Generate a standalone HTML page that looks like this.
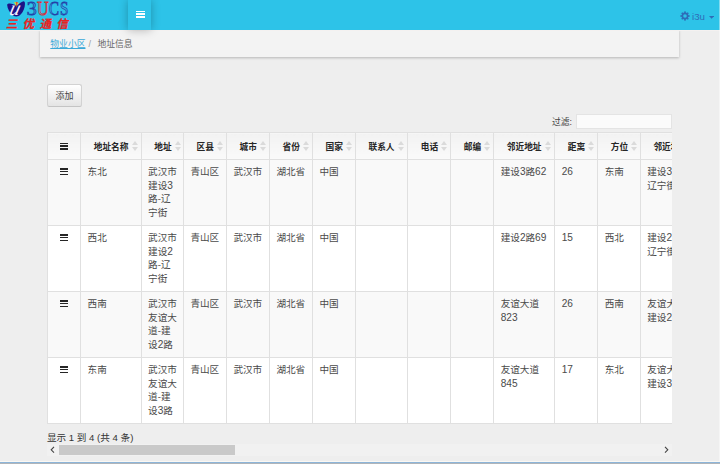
<!DOCTYPE html>
<html lang="zh-CN">
<head>
<meta charset="utf-8">
<title>地址信息</title>
<style>
*{box-sizing:border-box;margin:0;padding:0}
html,body{width:720px;height:464px;overflow:hidden}
body{background:#eeeeee;font-family:"Liberation Sans","Noto Sans CJK SC",sans-serif;font-size:9.33px;color:#444;position:relative}
.navbar{position:absolute;left:0;top:0;width:720px;height:29.7px;background:#2dc3e8;z-index:2}
.logo{position:absolute;left:0;top:0;width:80px;height:30px}
.toggle{position:absolute;left:128px;top:0;width:23.2px;height:29.7px;background:#2dc3e8;box-shadow:0 0 10px rgba(0,0,0,.27)}
.toggle i{position:absolute;left:7.8px;width:8.9px;height:1.85px;background:#fff}
.account{position:absolute;left:0;top:0;width:720px;height:30px;color:#2f6db8}
.account .name{position:absolute;left:692px;top:11.4px;font-size:9.7px;line-height:11px;color:#2f6db8;white-space:nowrap}
.crumbs{position:absolute;left:40px;top:30px;width:639px;height:27px;background:#f3f3f3;box-shadow:0 1px 2.5px rgba(0,0,0,.24);font-size:8.8px;line-height:28.6px;padding-left:10.3px;color:#666;white-space:nowrap}
.crumbs a{color:#3aa9d8;text-decoration:underline}
.crumbs .sep{color:#999;padding:0 4px 0 3px}
.btn{position:absolute;left:47px;top:84px;width:35px;height:23px;border:1px solid #d2d2d2;border-bottom-color:#c4c4c4;border-radius:2.5px;background:linear-gradient(#ffffff,#e4e4e4);font-size:9px;line-height:22.6px;text-align:center;color:#444}
.filter{position:absolute;left:552px;top:114.5px;height:14px;font-size:8.8px;line-height:14px;color:#444;white-space:nowrap}
.filter span{display:inline-block;width:24.5px}
.filter input{position:absolute;left:24px;top:-.5px;width:96px;height:14.5px;border:1px solid #e4e4e4;background:#fbfbfb;border-radius:0}
.scroller{position:absolute;left:47px;top:132px;width:625.3px;height:313px;overflow:hidden}
table{border-collapse:collapse;table-layout:fixed;width:700px;background:#fff}
th,td{border:1px solid #e0e0e0;vertical-align:top;text-align:left;overflow:hidden}
th{height:26.5px;font-size:8.7px;font-weight:bold;color:#262626;line-height:13.3px;padding:7.5px 0 0 12.7px;background:linear-gradient(#f2f2f2,#fafafa);white-space:nowrap}
td{height:66px;font-size:9.6px;line-height:13.45px;padding:5.9px 4px 0 6.6px;color:#4a4a4a;word-break:break-all}
.n{font-weight:normal;font-size:10.1px}
tr.odd td{background:#f9f9f9}
tr.even td{background:#ffffff}
.bars{display:inline-block;width:8px;height:7px;position:relative;vertical-align:top}
.bars i{position:absolute;left:0;width:8.3px;height:1.45px;background:#262626}
th.c0,td.c0{padding-left:0;padding-right:0;text-align:center}
th.c0 .bars{margin-top:2px}
td.c0 .bars{margin-top:2.7px}
.sort{display:inline-block;width:6px;height:10.2px;position:relative;vertical-align:top;margin:.5px 0 0 3.2px}
.sort:before,.sort:after{content:"";position:absolute;left:0;border-left:3px solid transparent;border-right:3px solid transparent}
.sort:before{top:0;border-bottom:4.8px solid #dadada}
.sort:after{bottom:0;border-top:4.8px solid #dadada}
.info{position:absolute;left:47px;top:430.5px;font-size:9.6px;line-height:13px;color:#333;white-space:nowrap}
.hscroll{position:absolute;left:47px;top:444.3px;width:625.3px;height:11.6px;background:#f1f1f1}
.hscroll .thumb{position:absolute;left:11.8px;top:.8px;width:176.5px;height:10px;background:#c9c9c9}
.hscroll svg{position:absolute;top:0}
.band{position:absolute;left:0;top:29.7px;width:720px;height:1.6px;background:#f4f1f0;z-index:1}
.redge{position:absolute;left:718.8px;top:0;width:1.2px;height:461px;background:rgba(255,255,255,.4);z-index:3}
.edge1{position:absolute;left:0;top:461px;width:720px;height:1px;background:#fbf8f3}
.edge2{position:absolute;left:0;top:462px;width:720px;height:1px;background:#8db5d9}
.edge3{position:absolute;left:0;top:463px;width:720px;height:1px;background:#b1b5b9}
</style>
</head>
<body>
<div class="navbar">
  <svg class="logo" viewBox="0 0 80 30" width="80" height="30">
    <path d="M7.1 4.8 C7.6 3.2 10.4 3.1 12.6 4 C14.2 4.6 15.6 5.4 16.6 5.3 C18.4 4.6 21 1.6 23.6 1.2 C25.2 1.4 25.2 4 24.7 6.4 C23.8 10.8 21.4 14.6 18.6 15.9 C16.8 16.7 14.8 16.5 13.2 15.4 C9.8 13 7.4 8.8 7.1 4.8 Z" fill="#1c1487"/>
    <path d="M14 1.8 L16.2 6.8 L16.2 2.4 Z" fill="#c8e03a"/>
    <path d="M15.8 1.8 L16.6 7.8 L18 2.2 Z" fill="#e0502a"/>
    <path d="M17.6 2.6 L17.4 6 L18.8 3 Z" fill="#f0d040"/>
    <text transform="translate(8.6 15) skewX(-14)" font-family="'Liberation Serif',serif" font-style="italic" font-size="21" fill="#f4f0ff" textLength="10.4" lengthAdjust="spacingAndGlyphs">u</text>
    <text x="26.7" y="14.5" font-family="'Liberation Serif',serif" font-size="18.4" fill="#38bde7" stroke="#2440a8" stroke-width=".8" textLength="10" lengthAdjust="spacingAndGlyphs">3</text>
    <text x="37" y="14.5" font-family="'Liberation Serif',serif" font-size="18.4" fill="#4cb8e4" stroke="#d8323c" stroke-width=".8" textLength="11.6" lengthAdjust="spacingAndGlyphs">U</text>
    <text x="49" y="14.5" font-family="'Liberation Serif',serif" font-size="18.4" fill="#38bde7" stroke="#2440a8" stroke-width=".8" textLength="10" lengthAdjust="spacingAndGlyphs">C</text>
    <text x="60" y="14.5" font-family="'Liberation Serif',serif" font-size="18.4" fill="#38bde7" stroke="#2440a8" stroke-width=".8" textLength="8.4" lengthAdjust="spacingAndGlyphs">S</text>
    <g font-family="'Noto Sans CJK SC',sans-serif" font-weight="bold" font-size="11.4" fill="#e8231f" stroke="#e8231f" stroke-width=".3">
      <text transform="translate(5.9 27.5) skewX(-12)">三</text>
      <text transform="translate(22.8 27.5) skewX(-12)">优</text>
      <text transform="translate(39.8 27.5) skewX(-12)">通</text>
      <text transform="translate(56.4 27.5) skewX(-12)">信</text>
    </g>
  </svg>
  <div class="toggle"><i style="top:10.6px"></i><i style="top:13.45px"></i><i style="top:16.3px"></i></div>
  <svg style="position:absolute;left:679.6px;top:10.8px" width="10" height="10" viewBox="-5 -5 10 10">
    <g fill="#2f6db8">
      <circle r="3.4"/>
      <rect x="-.85" y="-4.6" width="1.7" height="9.2"/>
      <rect x="-.85" y="-4.6" width="1.7" height="9.2" transform="rotate(45)"/>
      <rect x="-.85" y="-4.6" width="1.7" height="9.2" transform="rotate(90)"/>
      <rect x="-.85" y="-4.6" width="1.7" height="9.2" transform="rotate(135)"/>
    </g>
    <circle r="1.8" fill="#2dc3e8"/>
  </svg>
  <div class="account"><span class="name">i3u</span></div>
  <svg style="position:absolute;left:709px;top:16.2px" width="5.2" height="2.8" viewBox="0 0 5.2 2.8"><path d="M0 0h5.2L2.6 2.8z" fill="#2f6db8"/></svg>
</div>

<div class="crumbs"><a>物业小区</a><span class="sep">/</span> 地址信息</div>

<div class="btn">添加</div>

<div class="filter"><span>过滤:</span><input type="text"></div>

<div class="scroller">
<table>
<colgroup>
<col style="width:33px"><col style="width:60.5px"><col style="width:42.3px"><col style="width:43px"><col style="width:43px"><col style="width:43px"><col style="width:43px"><col style="width:52.3px"><col style="width:43px"><col style="width:43px"><col style="width:61px"><col style="width:43px"><col style="width:42.6px"><col style="width:107.7px">
</colgroup>
<thead>
<tr>
<th class="c0"><span class="bars"><i style="top:0"></i><i style="top:2.8px"></i><i style="top:5.6px"></i></span></th>
<th>地址名称<span class="sort"></span></th>
<th>地址<span class="sort"></span></th>
<th>区县<span class="sort"></span></th>
<th>城市<span class="sort"></span></th>
<th>省份<span class="sort"></span></th>
<th>国家<span class="sort"></span></th>
<th>联系人<span class="sort"></span></th>
<th>电话<span class="sort"></span></th>
<th>邮编<span class="sort"></span></th>
<th>邻近地址<span class="sort"></span></th>
<th>距离<span class="sort"></span></th>
<th>方位<span class="sort"></span></th>
<th>邻近地址2<span class="sort"></span></th>
</tr>
</thead>
<tbody>
<tr class="odd">
<td class="c0"><span class="bars"><i style="top:0"></i><i style="top:2.8px"></i><i style="top:5.6px"></i></span></td>
<td>东北</td><td>武汉市<br>建设<b class="n">3</b><br>路-辽<br>宁街</td><td>青山区</td><td>武汉市</td><td>湖北省</td><td>中国</td><td></td><td></td><td></td><td>建设<b class="n">3</b>路<b class="n">62</b></td><td><b class="n">26</b></td><td>东南</td><td>建设<b class="n">3</b>路-<br>辽宁街</td>
</tr>
<tr class="even">
<td class="c0"><span class="bars"><i style="top:0"></i><i style="top:2.8px"></i><i style="top:5.6px"></i></span></td>
<td>西北</td><td>武汉市<br>建设<b class="n">2</b><br>路-辽<br>宁街</td><td>青山区</td><td>武汉市</td><td>湖北省</td><td>中国</td><td></td><td></td><td></td><td>建设<b class="n">2</b>路<b class="n">69</b></td><td><b class="n">15</b></td><td>西北</td><td>建设<b class="n">2</b>路-<br>辽宁街</td>
</tr>
<tr class="odd">
<td class="c0"><span class="bars"><i style="top:0"></i><i style="top:2.8px"></i><i style="top:5.6px"></i></span></td>
<td>西南</td><td>武汉市<br>友谊大<br>道-建<br>设<b class="n">2</b>路</td><td>青山区</td><td>武汉市</td><td>湖北省</td><td>中国</td><td></td><td></td><td></td><td>友谊大道<br><b class="n">823</b></td><td><b class="n">26</b></td><td>西南</td><td>友谊大道-<br>建设<b class="n">2</b>路</td>
</tr>
<tr class="even">
<td class="c0"><span class="bars"><i style="top:0"></i><i style="top:2.8px"></i><i style="top:5.6px"></i></span></td>
<td>东南</td><td>武汉市<br>友谊大<br>道-建<br>设<b class="n">3</b>路</td><td>青山区</td><td>武汉市</td><td>湖北省</td><td>中国</td><td></td><td></td><td></td><td>友谊大道<br><b class="n">845</b></td><td><b class="n">17</b></td><td>东北</td><td>友谊大道-<br>建设<b class="n">3</b>路</td>
</tr>
</tbody>
</table>
</div>

<div class="info">显示 1 到 4 (共 4 条)</div>

<div class="hscroll">
  <svg style="left:3.4px" width="5" height="11.6" viewBox="0 0 5 11.6"><path d="M4 2.9L1.2 5.8L4 8.7" fill="none" stroke="#444" stroke-width="1.1"/></svg>
  <div class="thumb"></div>
  <svg style="left:616.5px" width="5" height="11.6" viewBox="0 0 5 11.6"><path d="M1 2.9L3.8 5.8L1 8.7" fill="none" stroke="#444" stroke-width="1.1"/></svg>
</div>

<div class="band"></div><div class="redge"></div>
<div class="edge1"></div><div class="edge2"></div><div class="edge3"></div>
</body>
</html>
